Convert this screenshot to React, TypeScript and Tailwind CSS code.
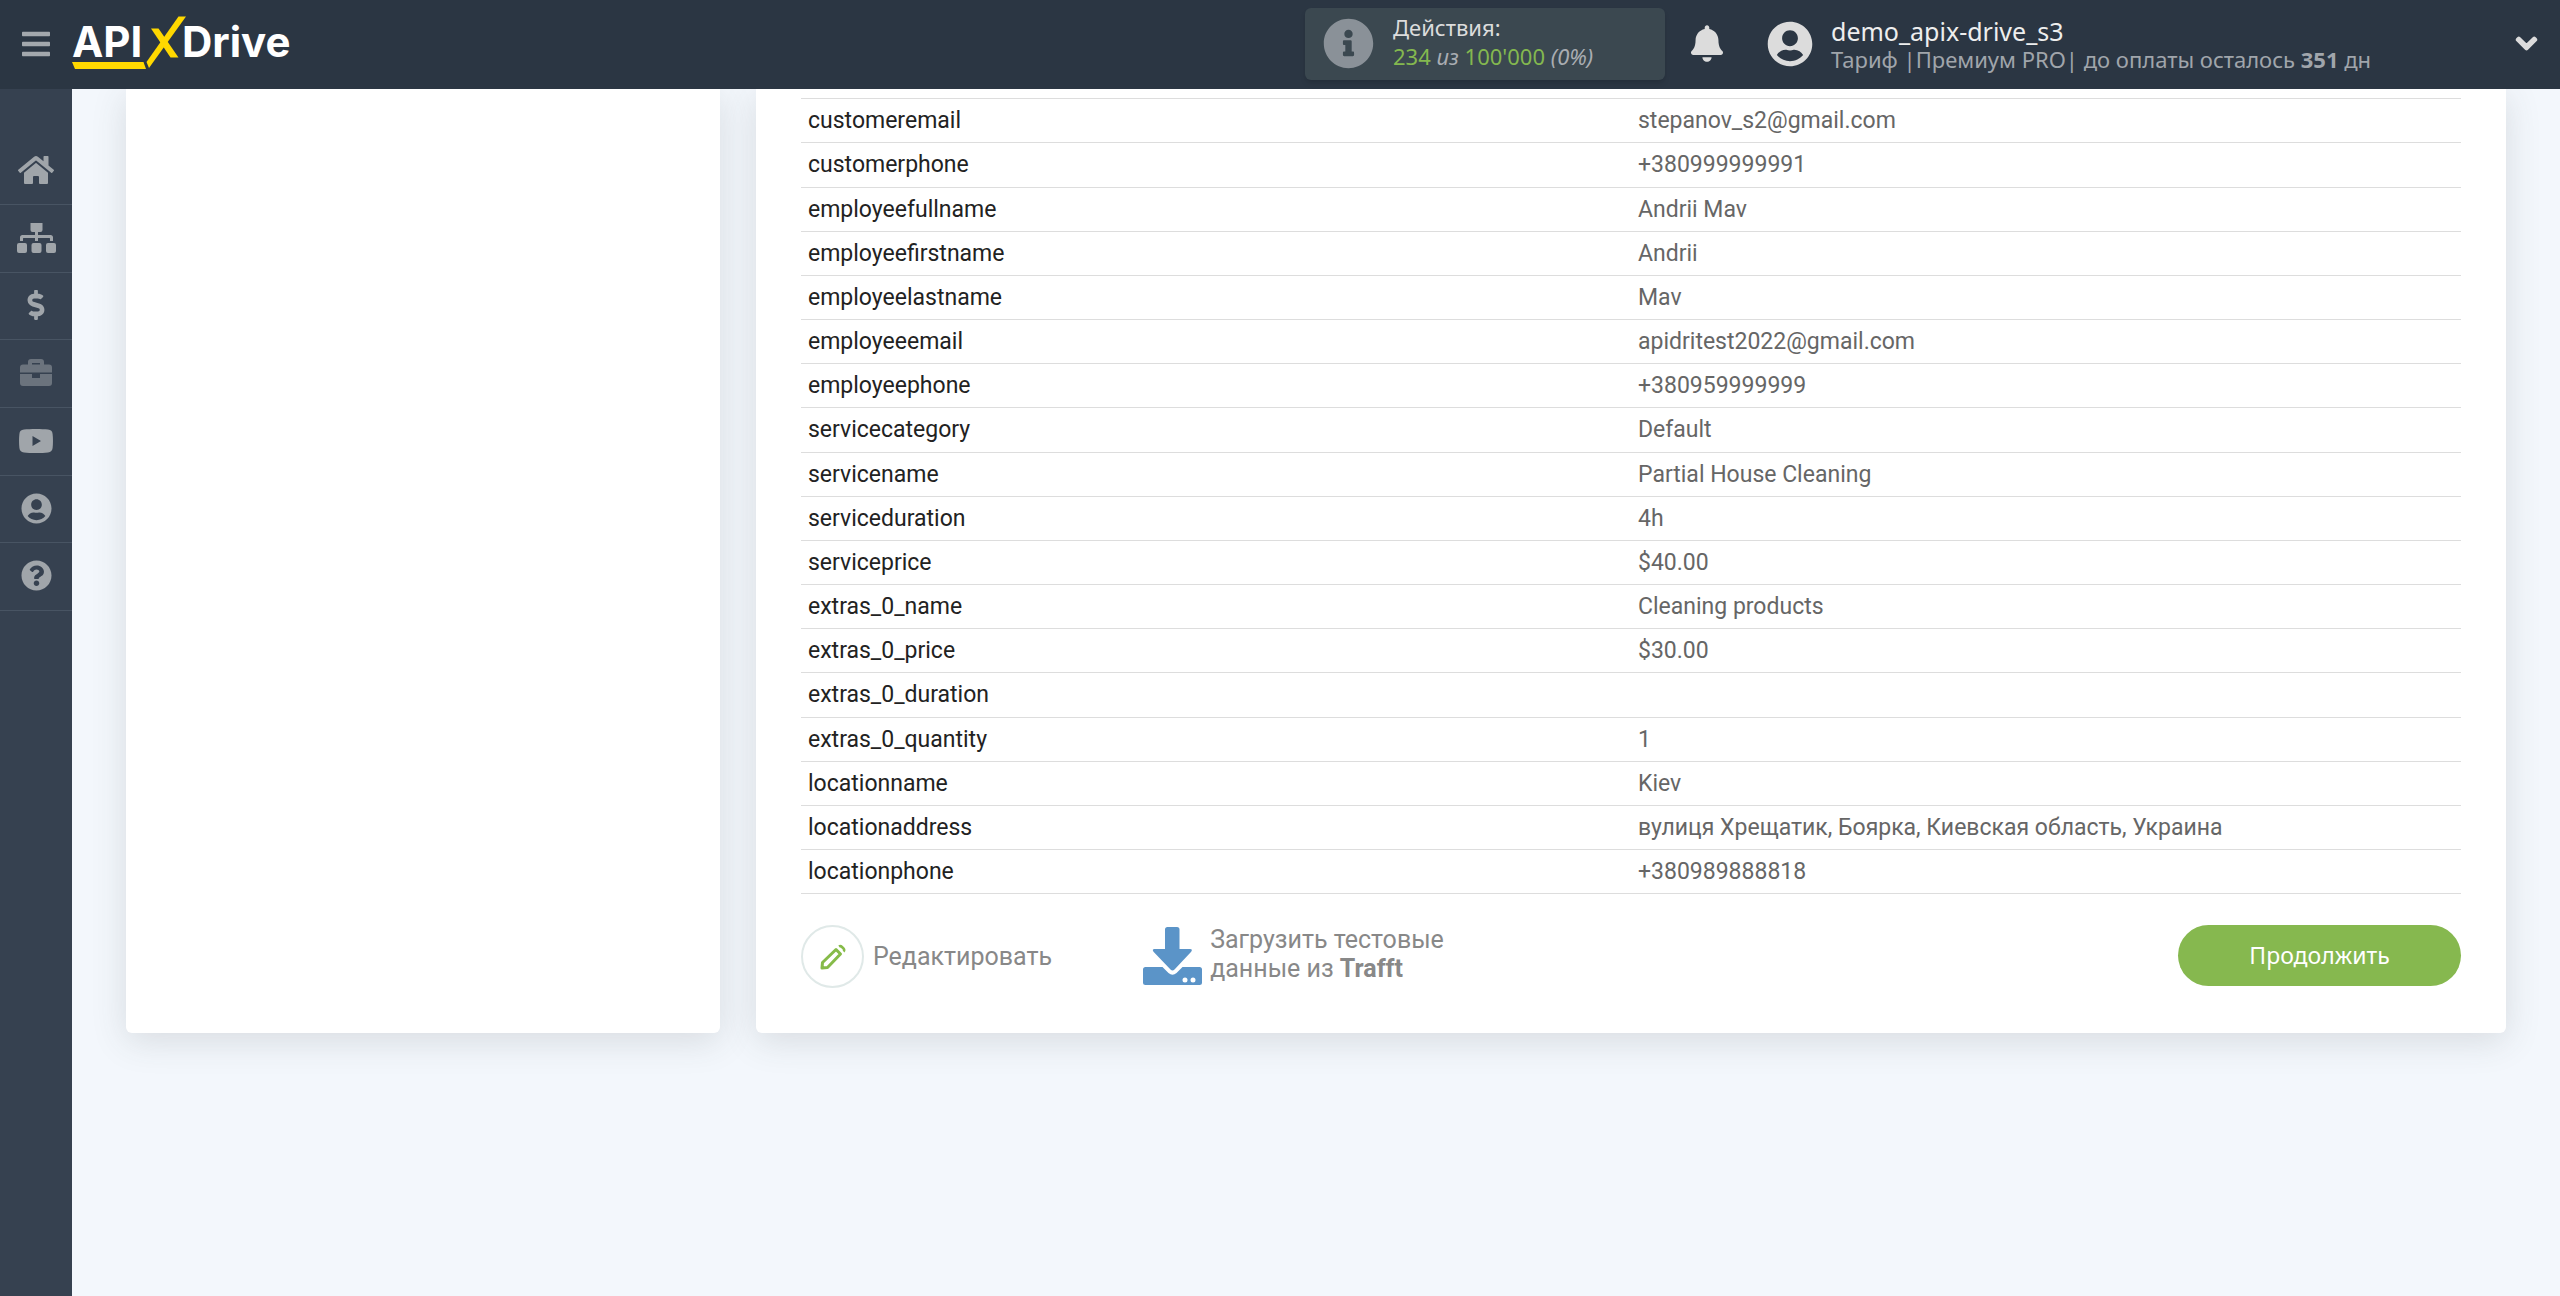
import React from "react";
import {
  FaBars,
  FaBell,
  FaChevronDown,
  FaDollarSign,
  FaHome,
  FaInfoCircle,
  FaQuestionCircle,
  FaUserCircle,
} from "react-icons/fa";

const rows: [string, string][] = [
  ["customeremail", "stepanov_s2@gmail.com"],
  ["customerphone", "+380999999991"],
  ["employeefullname", "Andrii Mav"],
  ["employeefirstname", "Andrii"],
  ["employeelastname", "Mav"],
  ["employeeemail", "apidritest2022@gmail.com"],
  ["employeephone", "+380959999999"],
  ["servicecategory", "Default"],
  ["servicename", "Partial House Cleaning"],
  ["serviceduration", "4h"],
  ["serviceprice", "$40.00"],
  ["extras_0_name", "Cleaning products"],
  ["extras_0_price", "$30.00"],
  ["extras_0_duration", ""],
  ["extras_0_quantity", "1"],
  ["locationname", "Kiev"],
  ["locationaddress", "вулиця Хрещатик, Боярка, Киевская область, Украина"],
  ["locationphone", "+380989888818"],
];

function SitemapIcon() {
  return (
    <svg viewBox="0 0 39 30" className="h-[30px] w-[39px]" fill="currentColor" aria-hidden="true">
      <path d="M13.500 0H25.500V7Q25.500 9 23.500 9H21V12H33.500Q36 12 36 14.500V18H33V15.500Q33 15 32.500 15H21V18H18V15H6.500Q6 15 6 15.500V18H3V14.500Q3 12 5.500 12H18V9H15.500Q13.500 9 13.500 7Z" />
      <rect x="0" y="20" width="10" height="10" rx="2" />
      <rect x="14.500" y="20" width="10" height="10" rx="2" />
      <rect x="29" y="20" width="10" height="10" rx="2" />
    </svg>
  );
}

function BriefcaseIcon() {
  return (
    <svg viewBox="0 0 32 27" className="h-[27px] w-8 opacity-50" fill="currentColor" aria-hidden="true">
      <path
        fillRule="evenodd"
        d="M11 0H21Q24 0 24 3V5.500H29Q32 5.500 32 8.500V13.500H0V8.500Q0 5.500 3 5.500H8V3Q8 0 11 0ZM12 4V5.500H20V4Z"
      />
      <path d="M0 15H12V19H20V15H32V24Q32 27 29 27H3Q0 27 0 24Z" />
    </svg>
  );
}

function PlayIcon() {
  return (
    <svg viewBox="0 0 34 24" className="h-6 w-[34px]" fill="currentColor" aria-hidden="true">
      <path
        fillRule="evenodd"
        d="M5 .6C11 -.1 23 -.1 29 .6C32 .9 33.300 2.300 33.600 5C34.100 9 34.100 15 33.600 19C33.300 21.700 32 23.100 29 23.400C23 24.100 11 24.100 5 23.400C2 23.100 .7 21.700 .4 19C-.1 15 -.1 9 .4 5C.7 2.300 2 .9 5 .6ZM13.500 7V17L22 12Z"
      />
    </svg>
  );
}

function PencilIcon() {
  return (
    <svg viewBox="0 0 26 26" className="size-[26px]" fill="none" stroke="#86bb49" strokeWidth="3" strokeLinejoin="round" aria-hidden="true">
      <path d="M2 24L2.500 18.500L16 5.500L20.500 10L7.500 23.500Z" />
      <path d="M19 2.500Q20.500 1.500 22 3L23.500 4.500Q25 6 23.500 7.500" strokeWidth="2.500" />
    </svg>
  );
}

function DownloadIcon() {
  return (
    <svg viewBox="0 0 59 58" className="mt-0.5 h-[58px] w-[59px] shrink-0" fill="#5b94c8" aria-hidden="true">
      <path d="M24.500 0H34Q36.500 0 36.500 2.500V22H47Q50 22 48.200 24.800L31.500 42.500Q29.500 44.500 27.500 42.500L10.500 24.800Q8.700 22 11.500 22H22V2.500Q22 0 24.500 0Z" />
      <path
        fillRule="evenodd"
        d="M2.500 40H19.500L25.500 46Q29.500 49.500 33.500 46L39.500 40H56.500Q59 40 59 42.500V55.500Q59 58 56.500 58H2.500Q0 58 0 55.500V42.500Q0 40 2.500 40ZM42 50.500A2.500 2.500 0 1 0 42 55.500A2.500 2.500 0 1 0 42 50.500ZM50 50.500A2.500 2.500 0 1 0 50 55.500A2.500 2.500 0 1 0 50 50.500Z"
      />
    </svg>
  );
}

function Logo() {
  return (
    <a href="#home" aria-label="APIXDrive" className="block shrink-0">
      <svg viewBox="0 0 224 56" className="h-14 w-56">
        <text x="0" y="41" fill="#fff" fontFamily="Inter, sans-serif" fontWeight="700" fontSize="42">
          API
        </text>
        <text x="110" y="41" fill="#fff" fontFamily="Inter, sans-serif" fontWeight="700" fontSize="42">
          Drive
        </text>
        <g fill="#ffd800">
          <path d="M0 46H71.500L74 53H3Z" />
          <path d="M106.500 .5H114L77 52L74.500 46Z" />
          <path d="M79 12.500H86.500L106.500 41.500H98.500Z" />
        </g>
      </svg>
    </a>
  );
}

const menu = [
  { name: "Главная", icon: <FaHome className="size-9" /> },
  { name: "Связи", icon: <SitemapIcon /> },
  { name: "Оплата", icon: <FaDollarSign className="size-[30px]" /> },
  { name: "Бизнес", icon: <BriefcaseIcon /> },
  { name: "Видео", icon: <PlayIcon /> },
  { name: "Профиль", icon: <FaUserCircle className="size-[31px]" /> },
  { name: "Помощь", icon: <FaQuestionCircle className="size-[31px]" /> },
];

export default function App() {
  return (
    <div className="flex min-h-screen flex-col bg-[#f3f7fc] font-['Roboto',sans-serif]">
      <header className="relative z-10 flex h-[89px] items-center bg-[#2b3643] pb-0.5 font-['Noto_Sans',sans-serif]">
        <div className="flex flex-1 items-center">
          <button aria-label="Меню" className="flex w-[72px] shrink-0 justify-center text-[#a3a8ad]">
            <FaBars className="size-8" />
          </button>
          <Logo />
        </div>
        <div className="flex w-[360px] shrink-0 items-center gap-[19px] rounded-md bg-[#3b4850] py-1 pl-[18px] shadow-md">
          <FaInfoCircle className="size-[51px] text-[#8a9198]" />
          <div className="h-16 pt-px text-[22px] leading-[29px] text-[#a9adb2]">
            <p className="text-[#dcdcdc]">Действия:</p>
            <p>
              <span className="text-[#84b84f]">234</span> <i>из</i> <span className="text-[#84b84f]">100'000</span> <i>(0%)</i>
            </p>
          </div>
        </div>
        <button aria-label="Уведомления" className="ml-[26px] mr-11 shrink-0 text-[#dcdcdc]">
          <FaBell className="h-[37px] w-8" />
        </button>
        <button className="flex w-[793px] shrink-0 items-center pr-[22px] text-left">
          <FaUserCircle className="mr-[18px] size-[46px] shrink-0 text-[#dcdcdc]" />
          <span className="flex-1 pt-0.5">
            <span className="block text-[25px] leading-7 text-[#eeeeee]">demo_apix-drive_s3</span>
            <span className="block text-[22px] leading-7 text-[#a0a5ab]">
              Тариф |Премиум PRO| до оплаты осталось <b>351</b> дн
            </span>
          </span>
          <FaChevronDown className="size-[23px] text-[#dcdcdc]" stroke="currentColor" strokeWidth={45} />
        </button>
      </header>
      <div className="flex flex-1">
        <nav className="w-[72px] shrink-0 bg-[#364150] pt-12">
          <ul>
            {menu.map((m) => (
              <li key={m.name} className="h-[68px] border-b border-[#485463] nth-[3n]:h-[67px]">
                <a href="#menu" aria-label={m.name} className="flex h-full items-center justify-center pb-0.5 text-[#a0a5aa]">
                  {m.icon}
                </a>
              </li>
            ))}
          </ul>
        </nav>
        <main className="flex flex-1 gap-9 self-start px-[54px]">
          <aside className="w-[594px] shrink-0 rounded-b-md bg-white shadow-[0_8px_35px_rgba(60,70,70,0.15)]" />
          <section className="flex-1 rounded-b-md bg-white px-[45px] pb-[45px] pt-[9px] shadow-[0_8px_35px_rgba(60,70,70,0.15)]">
            <table className="w-full table-fixed border-collapse border-y border-[#dddddd] text-[23px] leading-8">
              <tbody>
                {rows.map(([key, value]) => (
                  <tr key={key} className="h-11 border-b border-[#dddddd] nth-[6n+2]:h-[45px]">
                    <th scope="row" className="px-[7px] py-0 text-left font-normal text-[#222222]">{key}</th>
                    <td className="px-[7px] py-0 text-[#666666]">{value}</td>
                  </tr>
                ))}
              </tbody>
            </table>
            <div className="mt-[31px] flex items-start">
              <button className="flex items-center gap-[9px] text-[25px] text-[#888888]">
                <span className="flex size-[63px] items-center justify-center rounded-full border-2 border-[#e0e9e8]">
                  <PencilIcon />
                </span>
                Редактировать
              </button>
              <button className="ml-[91px] flex items-start gap-2 text-left text-[25px] leading-[29px] text-[#888888]">
                <DownloadIcon />
                <span>
                  Загрузить тестовые
                  <br />
                  данные из <b>Trafft</b>
                </span>
              </button>
              <button className="ml-auto h-[61px] w-[283px] rounded-full bg-[#86b84f] font-['Noto_Sans',sans-serif] text-[23px] text-white">
                Продолжить
              </button>
            </div>
          </section>
        </main>
      </div>
    </div>
  );
}
